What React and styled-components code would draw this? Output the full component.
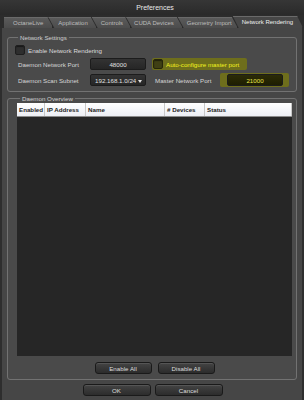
import React from "react";
import styled, { createGlobalStyle } from "styled-components";

const GlobalStyle = createGlobalStyle`
  html, body {
    margin: 0;
    padding: 0;
    background: #2f2f2f;
    font-family: "Liberation Sans", Arial, sans-serif;
  }
`;

const Window = styled.div`
  width: 304px;
  height: 400px;
  display: flex;
  flex-direction: column;
  background: #2e2e2e;
  overflow: hidden;
`;

const TitleBar = styled.div`
  height: 15px;
  display: flex;
  align-items: center;
  justify-content: center;
  background: linear-gradient(#363636, #2a2a2a);
  color: #e8e8e8;
  font-size: 7px;
  padding-left: 6px;
  box-sizing: border-box;
`;

const TabBar = styled.div`
  height: 13px;
  display: flex;
  align-items: flex-end;
  padding-left: 4px;
  background: #2c2c2c;
`;

const Tab = styled.div`
  height: 11px;
  display: flex;
  align-items: center;
  padding: 0 ${(p) => p.$pr}px 0 ${(p) => p.$pl}px;
  margin-left: ${(p) => (p.$first ? 0 : -5)}px;
  font-size: 6px;
  color: ${(p) => (p.$active ? "#f0f0f0" : "#bdbdbd")};
  background: ${(p) => (p.$active ? "#474747" : "linear-gradient(#5c5c5c, #4c4c4c)")};
  height: ${(p) => (p.$active ? 12 : 11)}px;
  clip-path: ${(p) =>
    p.$first
      ? "polygon(0 0, calc(100% - 6px) 0, 100% 100%, 0 100%)"
      : "polygon(0 0, calc(100% - 6px) 0, 100% 100%, 6px 100%)"};
  border-right: 1px solid #2a2a2a;
  box-shadow: inset 0 1px 0 #6a6a6a;
  white-space: nowrap;
  position: relative;
  z-index: ${(p) => (p.$active ? 2 : 1)};
`;

const Panel = styled.div`
  flex: 1;
  margin: 0 2px;
  background: #464646;
  display: flex;
  flex-direction: column;
  padding: 6px 5px 4px 5px;
  box-sizing: border-box;
`;

const Group = styled.fieldset`
  margin: 0;
  border: 1px solid #727272;
  border-radius: 3px;
  background: #4a4a4a;
  padding: ${(p) => p.$pad};
  min-width: 0;
  box-sizing: border-box;
  display: flex;
  flex-direction: column;
  flex: ${(p) => (p.$grow ? 1 : "none")};
  margin-top: ${(p) => p.$mt || 0}px;
`;

const Legend = styled.legend`
  font-size: 6.2px;
  color: #cfcfcf;
  padding: 0 2px;
  margin-left: 3px;
  line-height: 7px;
`;

const CheckRow = styled.div`
  display: flex;
  align-items: center;
  gap: 3px;
  height: 10px;
  font-size: 6.2px;
  color: #dcdcdc;
`;

const Check = styled.div`
  width: 10px;
  height: 10px;
  box-sizing: border-box;
  border-radius: 2px;
  background: ${(p) => (p.$hl ? "#3f3f14" : "#2e2e2e")};
  border: 1px solid ${(p) => (p.$hl ? "#26260a" : "#1e1e1e")};
  box-shadow: inset 0 1px 1px rgba(0, 0, 0, 0.5);
`;

const Row = styled.div`
  display: flex;
  align-items: center;
  height: 12px;
  margin-top: ${(p) => p.$mt}px;
`;

const Label = styled.div`
  width: ${(p) => p.$w}px;
  padding-left: ${(p) => p.$pl || 0}px;
  box-sizing: border-box;
  font-size: 6.2px;
  color: #d6d6d6;
  white-space: nowrap;
`;

const Input = styled.div`
  width: 56px;
  height: 12px;
  box-sizing: border-box;
  border-radius: 2px;
  border: 1px solid #1c1c1c;
  background: ${(p) =>
    p.$hl ? "linear-gradient(#2c2c06, #1e1e02)" : "linear-gradient(#333, #262626)"};
  color: ${(p) => (p.$hl ? "#e6e64a" : "#e0e0e0")};
  font-size: 6.2px;
  display: flex;
  align-items: center;
  justify-content: ${(p) => (p.$left ? "flex-start" : "center")};
  padding-left: ${(p) => (p.$left ? 4 : 0)}px;
  position: relative;
`;

const Arrow = styled.span`
  position: absolute;
  right: 3px;
  bottom: 2px;
  width: 0;
  height: 0;
  border-left: 2.5px solid transparent;
  border-right: 2.5px solid transparent;
  border-top: 3px solid #e0e0e0;
`;

const Highlight = styled.div`
  display: flex;
  align-items: center;
  background: #6e6e1c;
  border-radius: 2px;
  padding: ${(p) => p.$pad};
  margin-left: ${(p) => p.$ml}px;
  gap: 3px;
  font-size: 6.2px;
  color: #f2f21e;
`;

const Table = styled.div`
  flex: 1;
  display: flex;
  flex-direction: column;
  background: #262626;
`;

const Header = styled.div`
  height: 14px;
  display: grid;
  grid-template-columns: 28px 41px 79px 40px 1fr;
  background: linear-gradient(#ffffff, #eceef4);
  border-bottom: 1px solid #8a8a8a;
  box-sizing: border-box;
`;

const HeadCell = styled.div`
  display: flex;
  align-items: center;
  padding-left: 2px;
  font-size: 6.2px;
  font-weight: bold;
  color: #222;
  border-right: 1px solid #c8c8c8;
  white-space: nowrap;
`;

const ButtonRow = styled.div`
  display: flex;
  justify-content: center;
  gap: ${(p) => p.$gap}px;
  margin: ${(p) => p.$m};
  padding-left: ${(p) => p.$shift || 0}px;
`;

const Button = styled.div`
  width: ${(p) => p.$w}px;
  height: 12px;
  box-sizing: border-box;
  border-radius: 3px;
  border: 1px solid #1a1a1a;
  background: linear-gradient(#444, #2c2c2c);
  box-shadow: inset 0 1px 0 #555;
  color: #dedede;
  font-size: 6.2px;
  display: flex;
  align-items: center;
  justify-content: center;
`;

const tabs = [
  { name: "OctaneLive", pl: 9, pr: 9 },
  { name: "Application", pl: 10, pr: 8 },
  { name: "Controls", pl: 9, pr: 7 },
  { name: "CUDA Devices", pl: 8, pr: 8 },
  { name: "Geometry Import", pl: 9, pr: 5 },
  { name: "Network Rendering", pl: 9, pr: 9, active: true },
];

const columns = ["Enabled", "IP Address", "Name", "# Devices", "Status"];

export default function App() {
  return (
    <Window>
      <GlobalStyle />
      <TitleBar>Preferences</TitleBar>
      <TabBar>
        {tabs.map((t, i) => (
          <Tab key={t.name} $first={i === 0} $active={t.active} $pl={t.pl} $pr={t.pr}>
            {t.name}
          </Tab>
        ))}
      </TabBar>
      <Panel>
        <Group $pad="4px 6px 5px 7px">
          <Legend>Network Settings</Legend>
          <CheckRow>
            <Check />
            Enable Network Rendering
          </CheckRow>
          <Row $mt={3}>
            <Label $w={75} $pl={3}>Daemon Network Port</Label>
            <Input>48000</Input>
            <Highlight $pad="1px 8px 1px 1px" $ml={6}>
              <Check $hl />
              Auto-configure master port
            </Highlight>
          </Row>
          <Row $mt={4}>
            <Label $w={75} $pl={3}>Daemon Scan Subnet</Label>
            <Input $left>
              192.168.1.0/24
              <Arrow />
            </Input>
            <Label $w={74} $pl={9}>Master Network Port</Label>
            <Highlight $pad="1px 6px 1px 7px" $ml={0}>
              <Input $hl>21000</Input>
            </Highlight>
          </Row>
        </Group>
        <Group $grow $mt={3} $pad="1px 4px 0 9px">
          <Legend>Daemon Overview</Legend>
          <Table>
            <Header>
              {columns.map((c) => (
                <HeadCell key={c}>{c}</HeadCell>
              ))}
            </Header>
          </Table>
          <ButtonRow $gap={6} $m="6px 0 5px 0">
            <Button $w={57}>Enable All</Button>
            <Button $w={57}>Disable All</Button>
          </ButtonRow>
        </Group>
        <ButtonRow $gap={4} $m="4px 0 0 0" $shift={1}>
          <Button $w={68}>OK</Button>
          <Button $w={68}>Cancel</Button>
        </ButtonRow>
      </Panel>
    </Window>
  );
}
